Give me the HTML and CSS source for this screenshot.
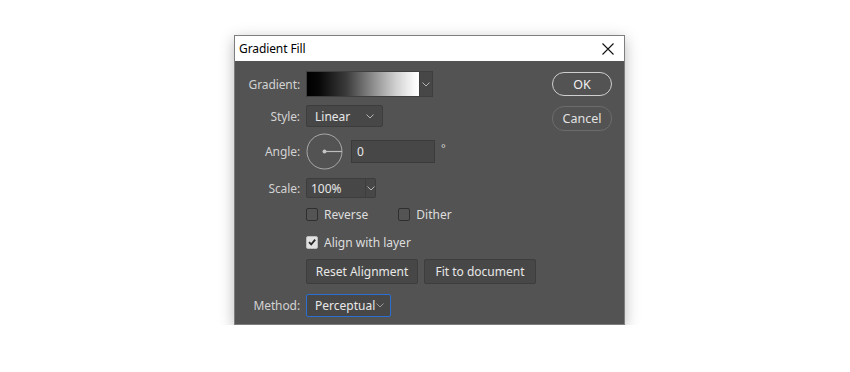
FILE: index.html
```html
<!DOCTYPE html>
<html>
<head>
<meta charset="utf-8">
<link rel="stylesheet" href="styles.css">
</head>
<body>
<div class="dialog">
  <div class="titlebar">
    <span class="title">Gradient Fill</span>
    <svg class="close" width="12" height="12" viewBox="0 0 12 12"><path d="M0.5 0.5 L11.5 11.5 M11.5 0.5 L0.5 11.5" stroke="#111" stroke-width="1.1" fill="none"/></svg>
  </div>
  <div class="body">
    <div class="form">
      <div class="row r-gradient">
        <span class="lbl">Gradient:</span>
        <div class="gradient-field">
          <div class="swatch"></div>
          <div class="drop"><svg width="8" height="5" viewBox="0 0 8 5"><path d="M0.5 0.5 L4 4 L7.5 0.5" stroke="#b5b5b5" fill="none"/></svg></div>
        </div>
      </div>
      <div class="row r-style">
        <span class="lbl">Style:</span>
        <div class="select style-select"><span>Linear</span><svg width="8" height="5" viewBox="0 0 8 5"><path d="M0.5 0.5 L4 4 L7.5 0.5" stroke="#b5b5b5" fill="none"/></svg></div>
      </div>
      <div class="row r-angle">
        <span class="lbl">Angle:</span>
        <svg class="dial" width="37" height="37" viewBox="0 0 37 37"><circle cx="18.5" cy="18.5" r="17.5" stroke="#a9a9a9" fill="none"/><line x1="18.5" y1="18.5" x2="36" y2="18.5" stroke="#bdbdbd" stroke-width="1.2"/><circle cx="18.5" cy="18.5" r="2" fill="#c4c4c4"/></svg>
        <div class="input angle-input">0</div>
        <span class="deg">°</span>
      </div>
      <div class="row r-scale">
        <span class="lbl">Scale:</span>
        <div class="scale-field"><span class="scale-val">100%</span><span class="scale-drop"><svg width="8" height="5" viewBox="0 0 8 5"><path d="M0.5 0.5 L4 4 L7.5 0.5" stroke="#b5b5b5" fill="none"/></svg></span></div>
      </div>
      <div class="row r-checks">
        <span class="lbl"></span>
        <label class="check"><span class="box"></span>Reverse</label>
        <label class="check dither"><span class="box"></span>Dither</label>
      </div>
      <div class="row r-align">
        <span class="lbl"></span>
        <label class="check"><span class="box checked"><svg width="10" height="10" viewBox="0 0 10 10"><path d="M2 5.2 L4.2 7.4 L8.2 2.6" stroke="#2a2a2a" stroke-width="1.8" fill="none"/></svg></span>Align with layer</label>
      </div>
      <div class="row r-buttons">
        <span class="lbl"></span>
        <div class="sbtn reset">Reset Alignment</div>
        <div class="sbtn fit">Fit to document</div>
      </div>
      <div class="row r-method">
        <span class="lbl">Method:</span>
        <div class="select method-select"><span>Perceptual</span><svg width="8" height="5" viewBox="0 0 8 5"><path d="M0.5 0.5 L4 4 L7.5 0.5" stroke="#9a9a9a" fill="none"/></svg></div>
      </div>
    </div>
    <div class="actions">
      <div class="pill ok">OK</div>
      <div class="pill cancel">Cancel</div>
    </div>
  </div>
</div>
</body>
</html>
```
FILE: styles.css
```css
html, body {
  margin: 0;
  padding: 0;
  background: #ffffff;
}
body {
  padding-top: 35px;
  font-family: "Noto Sans", "Open Sans", sans-serif;
  font-size: 12px;
}
.dialog {
  margin-left: 234px;
  width: 389px;
  height: 288px;
  border: 1px solid #7e7e7e;
  background: #535353;
  box-shadow: 0 4px 14px rgba(0,0,0,0.28);
  display: flex;
  flex-direction: column;
}
.titlebar {
  height: 25px;
  background: #ffffff;
  display: flex;
  align-items: center;
  justify-content: space-between;
  padding: 0 10px 0 4px;
}
.title {
  color: #000;
  font-size: 12px;
  letter-spacing: -0.1px;
}
.close {
  margin-top: 1px;
}
.body {
  flex: 1;
  display: flex;
  justify-content: space-between;
}
.form {
  display: flex;
  flex-direction: column;
}
.row {
  display: flex;
  align-items: center;
}
.lbl {
  width: 65px;
  margin-right: 6px;
  text-align: right;
  color: #d2d2d2;
  letter-spacing: -0.1px;
}
.r-gradient { margin-top: 10px; height: 26px; }
.r-style { margin-top: 8px; height: 22px; }
.r-angle { margin-top: 6px; height: 37px; }
.r-scale { margin-top: 8px; height: 20px; }
.r-checks { margin-top: 9px; height: 14px; }
.r-align { margin-top: 14px; height: 14px; }
.r-buttons { margin-top: 10px; height: 25px; }
.r-method { margin-top: 10px; height: 23px; }

.gradient-field {
  display: flex;
  height: 26px;
  width: 127px;
  border: 1px solid #3e3e3e;
  box-sizing: border-box;
  background: #474747;
}
.swatch {
  width: 112px;
  height: 24px;
  background: linear-gradient(to right, #000 0%, #060606 10%, #3a3a3a 35%, #8a8a8a 58%, #d2d2d2 80%, #fafafa 96%, #fff 100%);
}
.drop {
  flex: 1;
  display: flex;
  align-items: center;
  justify-content: center;
  border-left: 1px solid #3e3e3e;
}
.select {
  box-sizing: border-box;
  display: flex;
  align-items: center;
  justify-content: space-between;
  background: #474747;
  border: 1px solid #3d3d3d;
  border-radius: 2px;
  color: #e8e8e8;
}
.style-select {
  width: 77px;
  height: 22px;
  padding: 0 8px 0 8px;
}
.dial {
  display: block;
}
.input {
  box-sizing: border-box;
  background: #474747;
  border: 1px solid #3b3b3b;
  color: #e8e8e8;
  display: flex;
  align-items: center;
}
.angle-input {
  width: 84px;
  height: 23px;
  margin-left: 8px;
  padding-left: 5px;
}
.deg {
  color: #cdcdcd;
  margin-left: 6px;
  margin-top: -8px;
  font-size: 11px;
}
.scale-field {
  box-sizing: border-box;
  width: 70px;
  height: 20px;
  display: flex;
  background: #474747;
  border: 1px solid #3d3d3d;
  border-radius: 2px;
  color: #e8e8e8;
}
.scale-val {
  width: 54px;
  padding-left: 4px;
  display: flex;
  align-items: center;
  border-right: 1px solid #3d3d3d;
}
.scale-drop {
  flex: 1;
  display: flex;
  align-items: center;
  justify-content: center;
}
.check {
  display: flex;
  align-items: center;
  color: #dedede;
}
.box {
  box-sizing: border-box;
  width: 12px;
  height: 13px;
  border: 1px solid #2f2f2f;
  border-radius: 2px;
  background: #545454;
  margin-right: 6px;
  display: flex;
  align-items: center;
  justify-content: center;
}
.box.checked {
  background: #e2e2e2;
  border-color: #bdbdbd;
}
.dither {
  margin-left: 30px;
}
.sbtn {
  box-sizing: border-box;
  height: 25px;
  display: flex;
  align-items: center;
  justify-content: center;
  background: #474747;
  border: 1px solid #3d3d3d;
  border-radius: 2px;
  color: #e8e8e8;
}
.reset { width: 112px; }
.fit { width: 112px; margin-left: 6px; }
.method-select {
  width: 85px;
  height: 23px;
  padding: 0 6px 0 8px;
  border: 1px solid #2a6fd1;
}
.actions {
  display: flex;
  flex-direction: column;
  align-items: center;
  padding: 11px 12px 0 0;
}
.pill {
  box-sizing: border-box;
  width: 60px;
  border-radius: 12px;
  display: flex;
  align-items: center;
  justify-content: center;
  font-size: 12.5px;
}
.ok {
  height: 24px;
  border: 1.5px solid #cfcfcf;
  color: #f0f0f0;
}
.cancel {
  height: 25px;
  margin-top: 10px;
  border: 1.5px solid #6c6c6c;
  color: #e2e2e2;
}
```
